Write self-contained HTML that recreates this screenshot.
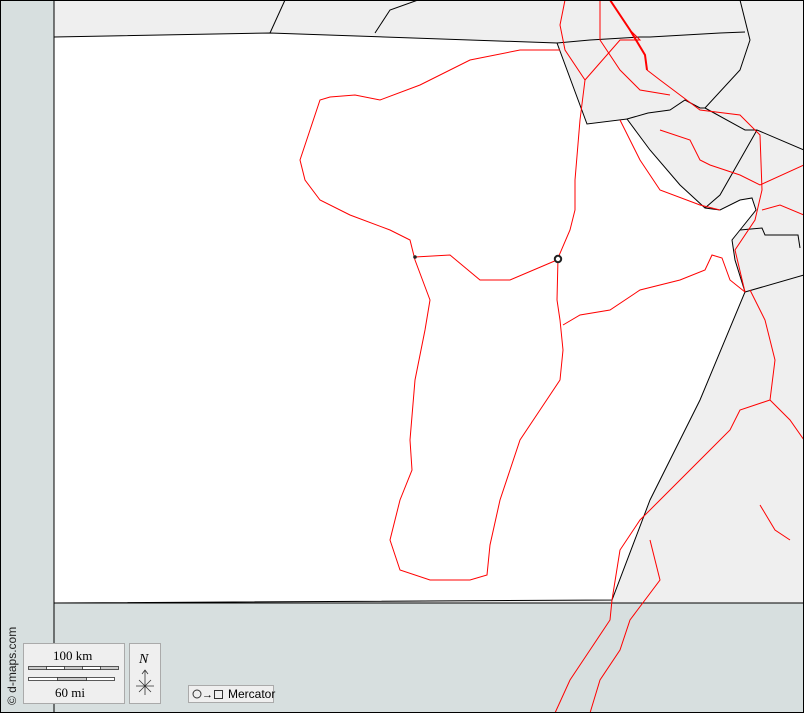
<html><head><style>body{margin:0}svg{display:block}</style></head><body>
<svg width="804" height="713" viewBox="0 0 804 713" xmlns="http://www.w3.org/2000/svg" font-family="Liberation Sans, sans-serif">
<rect width="804" height="713" fill="#efefef"/>
<rect x="0" y="0" width="54" height="713" fill="#d7dfdf"/>
<path d="M54,37 L270,33 L557,43 L587,124 L627,119 L650,150 L680,185 L705,208 L720,210 L740,200 L752,198 L756,210 L740,230 L732,240 L735,260 L745,292 L700,400 L650,500 L612,600 L54,603 Z" fill="#fff" stroke="#000" stroke-width="1"/>
<rect x="54" y="603" width="750" height="110" fill="#d7dfdf"/>
<line x1="54" y1="603" x2="804" y2="603" stroke="#000"/>
<line x1="54" y1="0" x2="54" y2="713" stroke="#000"/>
<g fill="none" stroke="#000" stroke-width="1">
<path d="M270,33 L285,0"/>
<path d="M557,43 L590,40 L640,37 L650,37 L720,33 L745,32"/>
<path d="M375,33 L390,10 L418,0"/>
<path d="M627,119 L648,113 L670,110 L685,100 L700,108 L705,108 L740,70 L750,40 L740,0"/>
<path d="M705,108 L745,130 L757,130 L804,150"/>
<path d="M757,130 L720,195 L705,208"/>
<path d="M745,292 L804,275"/>
<path d="M740,230 L762,228 L765,235 L798,235 L800,248"/>
</g>
<g fill="none" stroke="#f00" stroke-width="1">
<path d="M610,0 L630,30 L645,55 L647,70" stroke-width="2"/>
<path d="M647,70 L660,80 L680,95 L700,110 L740,115 L760,135 L762,190 L755,220 L735,250 L745,292"/>
<path d="M565,0 L560,25 L565,50 L585,80 L580,120 L575,180 L575,210 L570,230 L558,258 L557,300 L560,320 L563,350 L560,380 L540,410 L520,440 L510,470 L500,500 L490,545 L487,575 L470,580 L430,580 L400,570 L390,540 L400,500 L412,470 L410,440 L415,380 L425,330 L430,300 L415,260 L410,240 L390,230 L350,215 L320,200 L305,180 L300,160 L310,130 L320,100 L330,97 L355,95 L380,100 L420,85 L470,60 L520,50 L560,50"/>
<path d="M415,257 L450,255 L480,280 L510,280 L557,260"/>
<path d="M563,325 L580,315 L610,310 L640,290 L680,280 L705,270 L712,255 L722,258 L730,280 L745,292"/>
<path d="M585,80 L620,40 L640,40 L630,30"/>
<path d="M600,0 L600,40 L620,70 L640,90 L670,95"/>
<path d="M620,120 L640,160 L660,190 L700,205 L720,210"/>
<path d="M660,130 L690,140 L700,160 L710,165 L740,175 L760,185 L804,165"/>
<path d="M762,210 L780,205 L804,215"/>
<path d="M750,290 L765,320 L775,360 L770,400 L740,410 L730,430 L710,450 L680,480 L660,500 L640,520 L620,550 L612,600 L610,620 L590,650 L570,680 L555,713"/>
<path d="M770,400 L790,420 L804,440"/>
<path d="M650,540 L660,580 L630,620 L620,650 L600,680 L590,713"/>
<path d="M760,505 L775,530 L790,540"/>
</g>
<circle cx="558" cy="259" r="3.2" fill="#fff" stroke="#222" stroke-width="2"/>
<circle cx="415" cy="257" r="1.8" fill="#222"/>
<rect x="0.5" y="0.5" width="803" height="712" fill="none" stroke="#000"/>
<rect x="23.5" y="643.5" width="101" height="60" fill="#efefef" stroke="#aaa"/>
<text x="53" y="660" font-family="Liberation Serif, serif" font-size="13">100 km</text>
<rect x="28.5" y="666.5" width="90" height="3" fill="#ccc" stroke="#333" stroke-width="0.8"/>
<rect x="46.5" y="666.5" width="18" height="3" fill="#fff" stroke="#333" stroke-width="0.8"/>
<rect x="82.5" y="666.5" width="18" height="3" fill="#fff" stroke="#333" stroke-width="0.8"/>
<rect x="28.5" y="677.5" width="86" height="3" fill="#fff" stroke="#333" stroke-width="0.8"/>
<rect x="57.5" y="677.5" width="29" height="3" fill="#ccc" stroke="#333" stroke-width="0.8"/>
<text x="55" y="697" font-family="Liberation Serif, serif" font-size="13">60 mi</text>
<rect x="129.5" y="643.5" width="31" height="60" fill="#efefef" stroke="#aaa"/>
<text x="139" y="663" font-family="Liberation Serif, serif" font-style="italic" font-size="14">N</text>
<path d="M145,695 L145,670 M142,674 L145,670 L148,674 M136,686 L154,686 M139,680 L151,692 M151,680 L139,692" stroke="#333" fill="none" stroke-width="0.8"/>
<rect x="188.5" y="685.5" width="85" height="17" fill="#efefef" stroke="#aaa"/>
<circle cx="197" cy="694" r="4" fill="none" stroke="#333"/>
<text x="202" y="698" font-size="11">→</text>
<rect x="214.5" y="690.5" width="8" height="8" fill="none" stroke="#333"/>
<text x="228" y="698" font-size="12">Mercator</text>
<text transform="translate(16,705) rotate(-90)" font-size="12" fill="#222">© d-maps.com</text>
</svg>
</body></html>
